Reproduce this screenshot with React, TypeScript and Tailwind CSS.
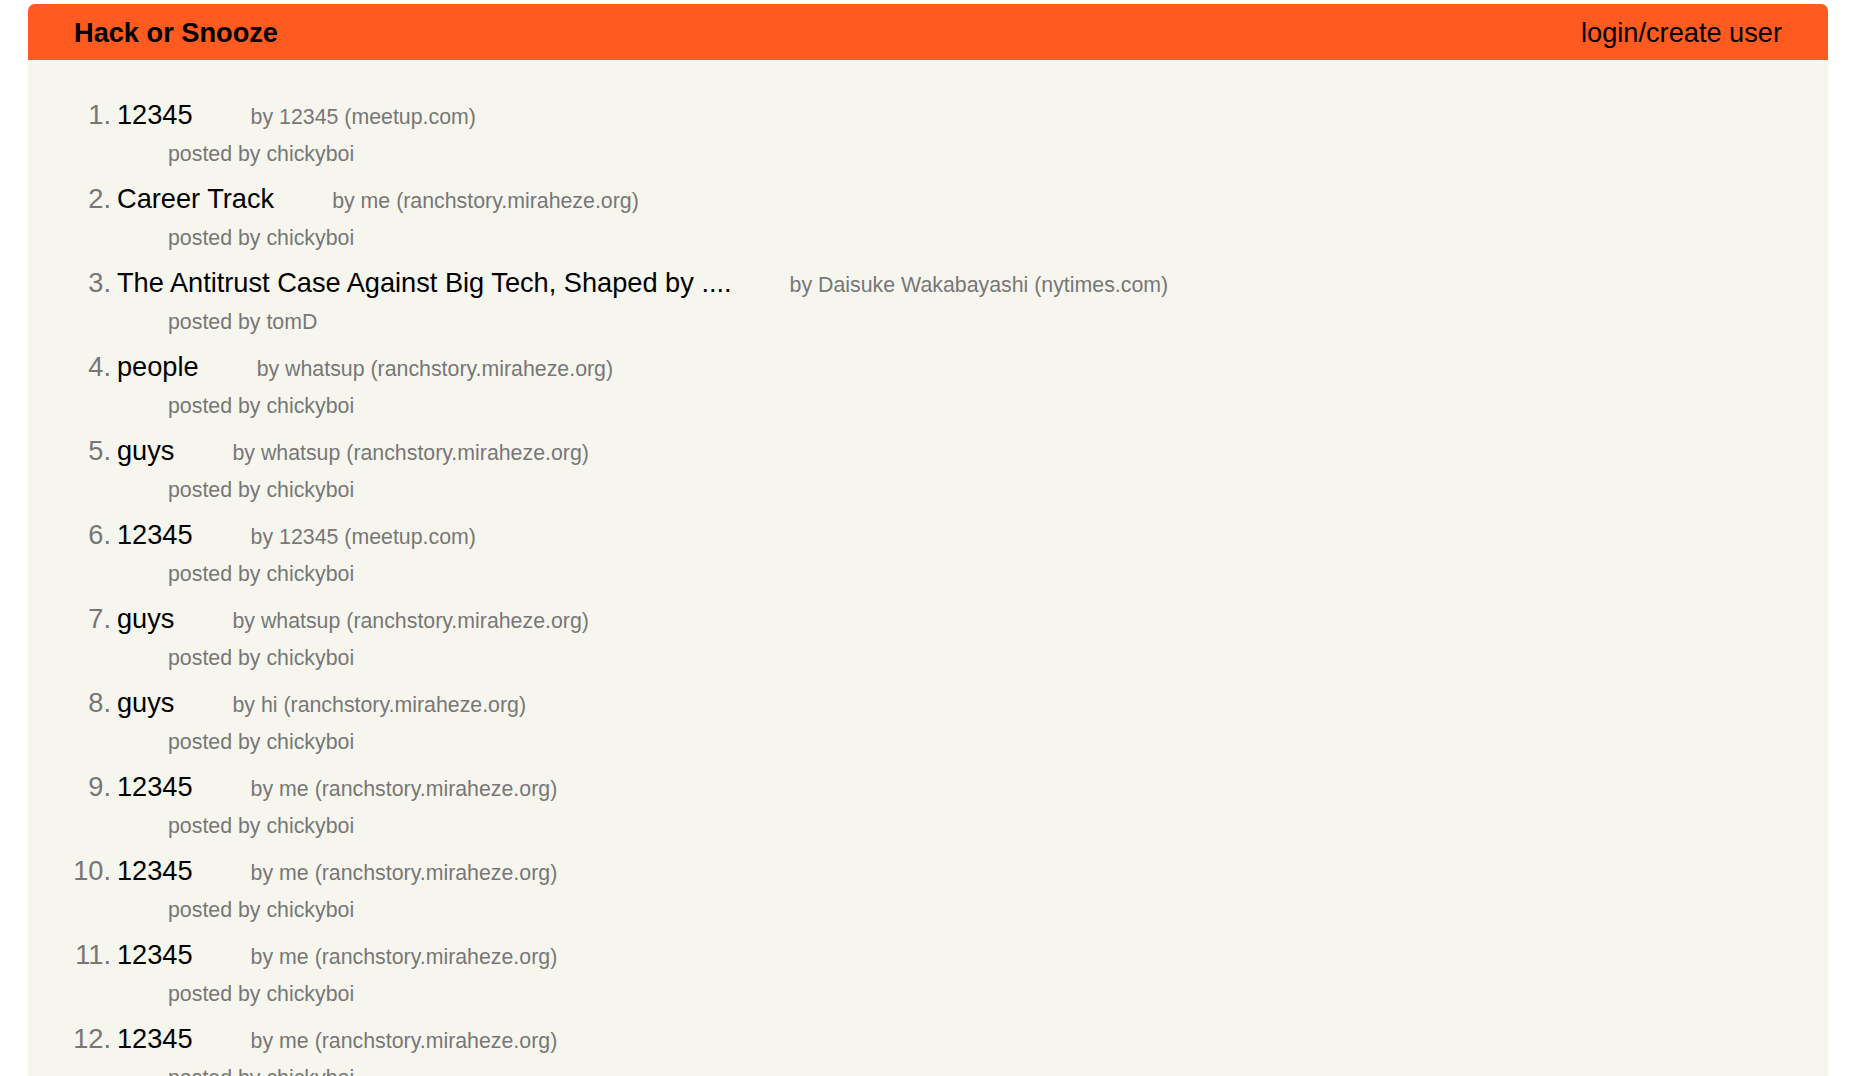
const stories = [
  { title: "12345", author: "12345", host: "meetup.com", user: "chickyboi" },
  { title: "Career Track", author: "me", host: "ranchstory.miraheze.org", user: "chickyboi" },
  { title: "The Antitrust Case Against Big Tech, Shaped by ....", author: "Daisuke Wakabayashi", host: "nytimes.com", user: "tomD" },
  { title: "people", author: "whatsup", host: "ranchstory.miraheze.org", user: "chickyboi" },
  { title: "guys", author: "whatsup", host: "ranchstory.miraheze.org", user: "chickyboi" },
  { title: "12345", author: "12345", host: "meetup.com", user: "chickyboi" },
  { title: "guys", author: "whatsup", host: "ranchstory.miraheze.org", user: "chickyboi" },
  { title: "guys", author: "hi", host: "ranchstory.miraheze.org", user: "chickyboi" },
  { title: "12345", author: "me", host: "ranchstory.miraheze.org", user: "chickyboi" },
  { title: "12345", author: "me", host: "ranchstory.miraheze.org", user: "chickyboi" },
  { title: "12345", author: "me", host: "ranchstory.miraheze.org", user: "chickyboi" },
  { title: "12345", author: "me", host: "ranchstory.miraheze.org", user: "chickyboi" },
]

export default function App() {
  return (
    <div className="min-h-screen bg-white pt-[4px] px-[28px] font-['Liberation_Sans',Arial,sans-serif]">
      <div className="rounded-t-[7px] overflow-hidden bg-[#f6f6ef] min-h-[1100px]">
        <nav className="h-[56px] bg-[#ff5a1f] px-[46px] pt-[2px] flex items-center justify-between text-black text-[27.2px]">
          <span className="font-bold">Hack or Snooze</span>
          <span>login/create user</span>
        </nav>

        <ol className="pt-[37px]">
          {stories.map((s, i) => (
            <li key={i} className="mb-[13px]">
              <div className="flex items-baseline h-[36px] leading-[36px]">
                <span className="w-[89px] pr-[6px] text-right text-[27.2px] text-[#777]">{i + 1}.</span>
                <span className="text-[27.2px] text-black">{s.title}</span>
                <small className="ml-[58px] text-[21.33px] text-[#777]">
                  by {s.author} ({s.host})
                </small>
              </div>
              <div className="mt-[7px] h-[28px] leading-[28px] pl-[140px] text-[21.33px] text-[#777]">
                posted by {s.user}
              </div>
            </li>
          ))}
        </ol>
      </div>
    </div>
  )
}
